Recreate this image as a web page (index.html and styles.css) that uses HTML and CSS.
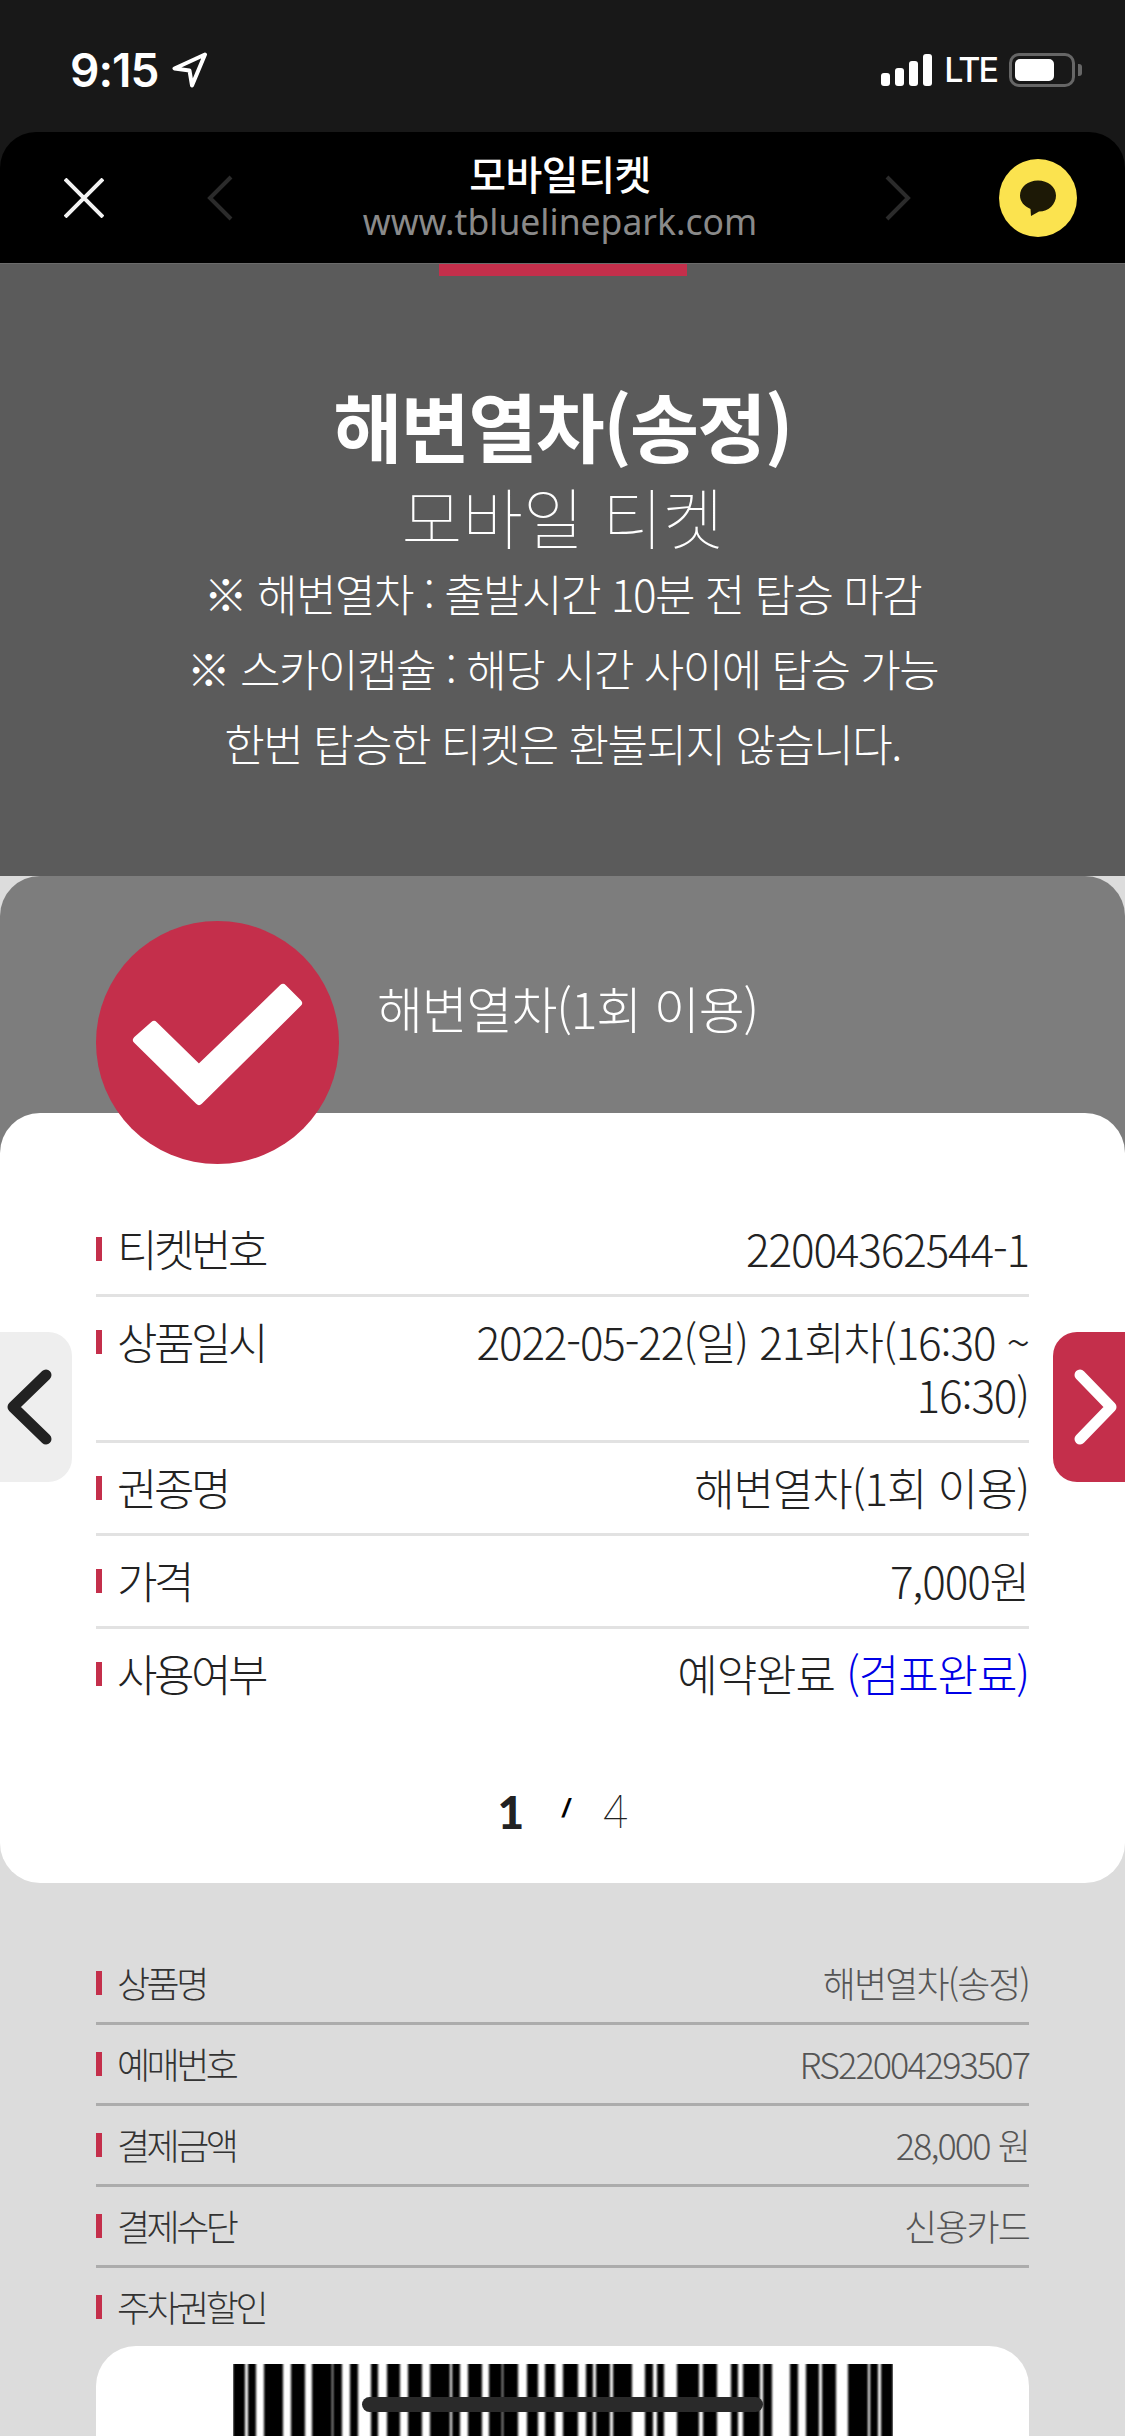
FILE: index.html
```html
<!DOCTYPE html>
<html lang="ko">
<head>
    <meta charset="UTF-8">
    <meta name="viewport" content="width=device-width, initial-scale=1.0">
    <title>모바일티켓</title>
    <link rel="stylesheet" href="styles.css">
</head>
<body>

    <div class="phone-top">
        <div class="statusbar">
            <div class="status-left">
                <span class="clock">9:15</span>
                <svg class="status-arrow" width="36" height="36" viewBox="0 0 36 36"><path d="M33 2.500 2.500 16.500 17.500 18.500 20 33.500Z" fill="none" stroke="#fff" stroke-width="4" stroke-linejoin="round"/></svg>
            </div>
            <div class="status-right">
                <div class="signal">
                    <i class="bar-1"></i><i class="bar-2"></i><i class="bar-3"></i><i class="bar-4"></i>
                </div>
                <span class="lte">LTE</span>
                <div class="battery"><div class="battery-level"></div></div>
                <div class="battery-cap"></div>
            </div>
        </div>

        <header class="appbar">
            <div class="appbar-left">
                <svg width="40" height="40" viewBox="0 0 40 40"><path d="M1 1 39 39M39 1 1 39" stroke="#f2f2f2" stroke-width="4"/></svg>
                <svg width="26" height="46" viewBox="0 0 26 46"><path d="M24 2 3 23 24 44" fill="none" stroke="#2b2b2b" stroke-width="4"/></svg>
            </div>
            <div class="appbar-title">
                <div class="appbar-name">모바일티켓</div>
                <div class="appbar-url">www.tbluelinepark.com</div>
            </div>
            <div class="appbar-right">
                <svg width="26" height="46" viewBox="0 0 26 46"><path d="M2 2 23 23 2 44" fill="none" stroke="#2b2b2b" stroke-width="4"/></svg>
                <div class="talk">
                    <svg width="40" height="38" viewBox="0 0 40 38"><path d="M20 1.500C10 1.500 2 8 2 16.500 2 22.500 6 27 12.500 30L13 37 21 32.500C31 32.500 38 25 38 16.500 38 8 30 1.500 20 1.500Z" fill="#1d1906"/></svg>
                </div>
            </div>
        </header>
    </div>

    <section class="hero">
        <div class="progress"></div>
        <h1>해변열차(송정)</h1>
        <h2>모바일 티켓</h2>
        <p>※ 해변열차 : 출발시간 10분 전 탑승 마감</p>
        <p>※ 스카이캡슐 : 해당 시간 사이에 탑승 가능</p>
        <p>한번 탑승한 티켓은 환불되지 않습니다.</p>
    </section>

    <section class="ticket">
        <div class="ticket-head">
            <div class="check">
                <svg width="243" height="243" viewBox="0 0 243 243"><path d="M41 119 58 104 103 148 187 67 202 82 103 180Z" fill="#fff" stroke="#fff" stroke-width="8" stroke-linejoin="round"/></svg>
            </div>
            <div class="ticket-name">해변열차(1회 이용)</div>
        </div>

        <div class="ticket-body">
            <button class="nav nav-prev">
                <svg width="56" height="78" viewBox="0 0 56 78"><path d="M46 7 13 39 46 71" fill="none" stroke="#222" stroke-width="11" stroke-linecap="round" stroke-linejoin="round"/></svg>
            </button>
            <button class="nav nav-next">
                <svg width="56" height="78" viewBox="0 0 56 78"><path d="M11 7 42 39 11 71" fill="none" stroke="#fff" stroke-width="11" stroke-linecap="round" stroke-linejoin="round"/></svg>
            </button>

            <dl class="rows">
                <div class="row"><dt>티켓번호</dt><dd>22004362544-1</dd></div>
                <div class="row"><dt>상품일시</dt><dd>2022-05-22(일) 21회차(16:30 ~<br>16:30)</dd></div>
                <div class="row"><dt>권종명</dt><dd>해변열차(1회 이용)</dd></div>
                <div class="row"><dt>가격</dt><dd>7,000원</dd></div>
                <div class="row"><dt>사용여부</dt><dd>예약완료 <span class="checked">(검표완료)</span></dd></div>
            </dl>

            <div class="pager">
                <b>1</b><i>/</i><span>4</span>
            </div>
        </div>
    </section>

    <section class="summary">
        <dl class="rows">
            <div class="row"><dt>상품명</dt><dd>해변열차(송정)</dd></div>
            <div class="row"><dt>예매번호</dt><dd>RS22004293507</dd></div>
            <div class="row"><dt>결제금액</dt><dd>28,000 원</dd></div>
            <div class="row"><dt>결제수단</dt><dd>신용카드</dd></div>
            <div class="row"><dt>주차권할인</dt></div>
        </dl>
        <div class="barcode-card">
            <svg class="barcode" width="660" height="73" viewBox="233 0 660 73">
                <defs><filter id="soft" x="-2%" width="104%"><feGaussianBlur stdDeviation="1.1 0"/></filter></defs>
                <g filter="url(#soft)">
                    <rect x="233" width="12" height="73"/><rect x="248" width="8" height="73"/>
                    <rect x="264" width="19" height="73"/><rect x="291" width="14" height="73"/>
                    <rect x="312" width="20" height="73"/><rect x="333" width="9" height="73"/>
                    <rect x="350" width="8" height="73"/><rect x="371" width="7" height="73"/>
                    <rect x="387" width="13" height="73"/><rect x="408" width="14" height="73"/>
                    <rect x="430" width="20" height="73"/><rect x="452" width="8" height="73"/>
                    <rect x="468" width="14" height="73"/><rect x="489" width="13" height="73"/>
                    <rect x="503" width="15" height="73"/><rect x="527" width="11" height="73"/>
                    <rect x="545" width="10" height="73"/><rect x="563" width="15" height="73"/>
                    <rect x="586" width="7" height="73"/><rect x="596" width="14" height="73"/>
                    <rect x="613" width="19" height="73"/><rect x="645" width="8" height="73"/>
                    <rect x="657" width="7" height="73"/><rect x="677" width="22" height="73"/>
                    <rect x="703" width="14" height="73"/><rect x="731" width="7" height="73"/>
                    <rect x="743" width="17" height="73"/><rect x="763" width="9" height="73"/>
                    <rect x="790" width="8" height="73"/><rect x="806" width="13" height="73"/>
                    <rect x="822" width="14" height="73"/><rect x="848" width="20" height="73"/>
                    <rect x="870" width="8" height="73"/><rect x="881" width="12" height="73"/>
                </g>
            </svg>
        </div>
    </section>

    <div class="home-indicator"></div>

</body>
</html>
```

FILE: styles.css
```css
* {
    box-sizing: border-box;
}
html, body {
    margin: 0;
    padding: 0;
}
body {
    position: relative;
    width: 1125px;
    height: 2436px;
    overflow: hidden;
    background-color: #dcdcdc;
    font-family: "Noto Sans CJK KR", "Noto Sans", sans-serif;
    color: #222;
}

/* status bar + app bar */
.phone-top {
    background-color: #181818;
}
.statusbar {
    display: flex;
    justify-content: space-between;
    align-items: flex-start;
    height: 132px;
    padding: 52px 43px 0 70px;
    color: #fff;
}
.status-left, .status-right {
    display: flex;
    align-items: center;
}
.clock {
    font-family: Inter, sans-serif;
    font-weight: 600;
    font-size: 46px;
    line-height: 35px;
    letter-spacing: -1px;
}
.status-arrow {
    margin-left: 14px;
}
.signal {
    display: flex;
    align-items: flex-end;
    gap: 5px;
    height: 33px;
}
.signal i {
    width: 9px;
    border-radius: 3px;
    background-color: #fff;
}
.bar-1 { height: 13px; }
.bar-2 { height: 18px; }
.bar-3 { height: 25px; }
.bar-4 { height: 32px; }
.lte {
    margin-left: 12px;
    font-family: Inter, sans-serif;
    font-size: 34px;
    font-weight: 500;
    line-height: 35px;
    letter-spacing: -2px;
}
.battery {
    width: 66px;
    height: 34px;
    margin-left: 12px;
    padding: 3px;
    border: 3px solid #666;
    border-radius: 10px;
}
.battery-level {
    width: 39px;
    height: 22px;
    border-radius: 5px;
    background-color: #fff;
}
.battery-cap {
    width: 4px;
    height: 12px;
    margin-left: 3px;
    border-radius: 0 3px 3px 0;
    background-color: #666;
}

.appbar {
    display: grid;
    grid-template-columns: 240px 1fr 240px;
    align-items: center;
    height: 131px;
    border-radius: 36px 36px 0 0;
    background-color: #000;
}
.appbar-left {
    display: flex;
    align-items: center;
    gap: 103px;
    padding-left: 64px;
}
.appbar-right {
    display: flex;
    align-items: center;
    justify-content: space-between;
    padding-right: 48px;
}
.appbar-title {
    padding: 0 5px 4px 0;
    text-align: center;
}
.appbar-name {
    font-size: 40px;
    font-weight: 500;
    line-height: 50px;
    color: #fff;
    letter-spacing: -0.500px;
}
.appbar-url {
    margin-top: 1px;
    font-family: "Noto Sans", sans-serif;
    font-size: 35.500px;
    line-height: 44px;
    color: #8a8a8a;
}
.talk {
    display: flex;
    align-items: center;
    justify-content: center;
    width: 78px;
    height: 78px;
    border-radius: 50%;
    background-color: #fbe34f;
}

/* hero */
.hero {
    height: 613px;
    border-top: 1px solid #6b6b6b;
    background-color: #5b5b5b;
    color: #fff;
    text-align: center;
}
.progress {
    width: 248px;
    height: 12px;
    margin: 0 auto;
    background-color: #c42f4b;
}
.hero h1 {
    margin: 0;
    padding-top: 104px;
    font-size: 75px;
    font-weight: 700;
    line-height: 90px;
    letter-spacing: -1.500px;
}
.hero h2 {
    margin: 0;
    padding-top: 4px;
    font-size: 66px;
    font-weight: 100;
    line-height: 82px;
}
.hero p {
    margin: 0;
    font-size: 44px;
    font-weight: 200;
    line-height: 75px;
    letter-spacing: -1.500px;
}

/* ticket */
.ticket-head {
    position: relative;
    height: 277px;
    margin-bottom: -40px;
    padding: 93px 0 0 377px;
    border-radius: 40px 40px 0 0;
    background-color: #7d7d7d;
}
.ticket-name {
    font-size: 50px;
    font-weight: 200;
    line-height: 76px;
    color: #fff;
    letter-spacing: -1.200px;
}
.check {
    position: absolute;
    z-index: 2;
    top: 45px;
    left: 96px;
    width: 243px;
    height: 243px;
    border-radius: 50%;
    background-color: #c42f4b;
}
.ticket-body {
    position: relative;
    height: 770px;
    padding: 91px 96px 0;
    border-radius: 40px;
    background-color: #fff;
}
.nav {
    position: absolute;
    top: 219px;
    display: flex;
    align-items: center;
    width: 72px;
    height: 150px;
    padding: 0;
    border: 0;
}
.nav-prev {
    left: 0;
    border-radius: 0 24px 24px 0;
    background-color: #eee;
}
.nav-next {
    right: 0;
    justify-content: flex-end;
    border-radius: 24px 0 0 24px;
    background-color: #c42f4b;
}

.rows {
    margin: 0;
}
.row {
    display: flex;
    justify-content: space-between;
    gap: 60px;
    padding: 18px 0 19px;
    border-bottom: 3px solid #e2e2e2;
    font-size: 44px;
    font-weight: 200;
    line-height: 53px;
}
.row:last-child {
    border-bottom: 0;
}
.row dt {
    position: relative;
    flex: none;
    padding-left: 21px;
    letter-spacing: -3.500px;
}
.row dt::before {
    content: "";
    position: absolute;
    left: 0;
    top: 15px;
    width: 6px;
    height: 24px;
    background-color: #c42f4b;
}
.row dd {
    margin: 0;
    text-align: right;
    letter-spacing: -1.100px;
}
.checked {
    color: #0000e6;
}

.pager {
    display: flex;
    justify-content: center;
    align-items: center;
    gap: 38px;
    margin-top: 66px;
    line-height: 54px;
}
.pager b {
    font-family: Lato, sans-serif;
    font-size: 46px;
    font-weight: 900;
}
.pager i {
    margin: -8px -5px 0 0;
    font-family: "Liberation Sans", sans-serif;
    font-size: 26px;
    font-weight: 700;
    color: #000;
}
.pager span {
    font-family: Roboto, sans-serif;
    font-size: 46px;
    font-weight: 100;
    color: #222;
}

/* order summary */
.summary {
    padding: 61px 96px 0;
}
.summary .row {
    padding: 12px 0 13px;
    border-bottom-color: #acacac;
    font-size: 36px;
    color: #333;
}
.summary .row dt {
    letter-spacing: -3.500px;
}
.summary .row dt::before {
    top: 15px;
    height: 24px;
}
.summary .row dd {
    color: #555;
    letter-spacing: -1.900px;
}
.barcode-card {
    height: 91px;
    padding-top: 18px;
    border-radius: 40px 40px 0 0;
    background-color: #fff;
}
.barcode {
    display: block;
    margin-left: 137px;
}

.home-indicator {
    position: absolute;
    left: 362px;
    top: 2397px;
    width: 401px;
    height: 15px;
    border-radius: 8px;
    background-color: #2a2a2a;
}
```
